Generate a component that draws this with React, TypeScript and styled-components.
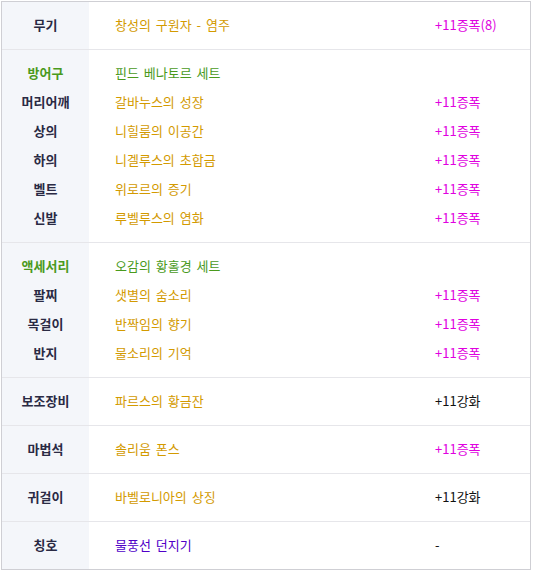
import React from "react"
import styled, { createGlobalStyle } from "styled-components"

const GlobalStyle = createGlobalStyle`
  html, body {
    margin: 0;
    padding: 0;
    background: #fff;
    font-family: "Noto Sans CJK KR", "Noto Sans", sans-serif;
  }
`

type Tone = "item" | "set" | "title"
type ValueTone = "star" | "plain"

type Row = {
  label: string
  green?: boolean
  name: string
  tone: Tone
  value?: string
  valueTone?: ValueTone
}

const sections: Row[][] = [
  [{ label: "무기", name: "창성의 구원자 - 염주", tone: "item", value: "+11증폭(8)", valueTone: "star" }],
  [
    { label: "방어구", green: true, name: "핀드 베나토르 세트", tone: "set" },
    { label: "머리어깨", name: "갈바누스의 성장", tone: "item", value: "+11증폭", valueTone: "star" },
    { label: "상의", name: "니힐룸의 이공간", tone: "item", value: "+11증폭", valueTone: "star" },
    { label: "하의", name: "니겔루스의 초합금", tone: "item", value: "+11증폭", valueTone: "star" },
    { label: "벨트", name: "위로르의 증기", tone: "item", value: "+11증폭", valueTone: "star" },
    { label: "신발", name: "루벨루스의 염화", tone: "item", value: "+11증폭", valueTone: "star" },
  ],
  [
    { label: "액세서리", green: true, name: "오감의 황홀경 세트", tone: "set" },
    { label: "팔찌", name: "샛별의 숨소리", tone: "item", value: "+11증폭", valueTone: "star" },
    { label: "목걸이", name: "반짝임의 향기", tone: "item", value: "+11증폭", valueTone: "star" },
    { label: "반지", name: "물소리의 기억", tone: "item", value: "+11증폭", valueTone: "star" },
  ],
  [{ label: "보조장비", name: "파르스의 황금잔", tone: "item", value: "+11강화", valueTone: "plain" }],
  [{ label: "마법석", name: "솔리움 폰스", tone: "item", value: "+11증폭", valueTone: "star" }],
  [{ label: "귀걸이", name: "바벨로니아의 상징", tone: "item", value: "+11강화", valueTone: "plain" }],
  [{ label: "칭호", name: "물풍선 던지기", tone: "title", value: "-", valueTone: "plain" }],
]

const toneColor: Record<Tone, string> = {
  item: "#d39a00",
  set: "#4a9a1c",
  title: "#5000c8",
}

const Frame = styled.div`
  margin: 1px;
  width: 528px;
  border: 1px solid #cfcfd4;
  background: #fff;
`

const Section = styled.div`
  display: grid;
  grid-template-columns: 87px 1fr;
  border-top: 1px solid #e6e6ea;

  &:first-child {
    border-top: none;
  }
`

const LabelCol = styled.div`
  background: #f4f6fa;
  padding: 8px 0 10px;
`

const BodyCol = styled.div`
  padding: 8px 0 10px;
`

const Line = styled.div`
  height: 29px;
  display: flex;
  align-items: center;
  font-size: 13px;
  white-space: nowrap;
`

const Label = styled(Line)<{ $green?: boolean }>`
  justify-content: center;
  font-weight: bold;
  color: ${(p) => (p.$green ? "#4a9a1c" : "#2a2a44")};
`

const Name = styled.span<{ $tone: Tone }>`
  width: 320px;
  padding-left: 26px;
  word-spacing: 2px;
  color: ${(p) => toneColor[p.$tone]};
`

const Value = styled.span<{ $tone: ValueTone }>`
  color: ${(p) => (p.$tone === "star" ? "#e000e0" : "#111")};
`

export default function App() {
  return (
    <>
      <GlobalStyle />
      <Frame>
        {sections.map((rows, i) => (
          <Section key={i}>
            <LabelCol>
              {rows.map((r) => (
                <Label key={r.label} $green={r.green}>
                  {r.label}
                </Label>
              ))}
            </LabelCol>
            <BodyCol>
              {rows.map((r) => (
                <Line key={r.label}>
                  <Name $tone={r.tone}>{r.name}</Name>
                  {r.value && r.valueTone && <Value $tone={r.valueTone}>{r.value}</Value>}
                </Line>
              ))}
            </BodyCol>
          </Section>
        ))}
      </Frame>
    </>
  )
}
